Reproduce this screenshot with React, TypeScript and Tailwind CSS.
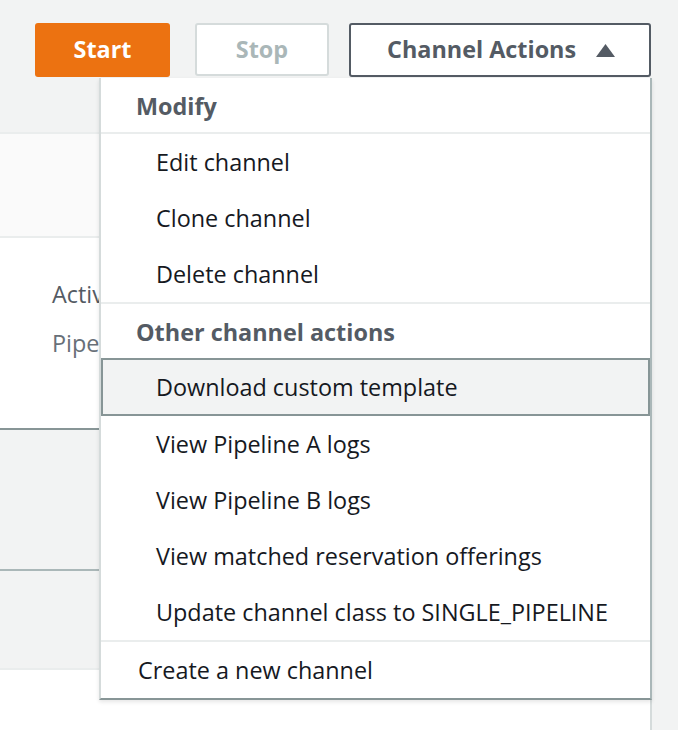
import React from 'react';

const font = { fontFamily: '"Open Sans", "Liberation Sans", sans-serif' };

const modifyItems = ['Edit channel', 'Clone channel', 'Delete channel'];
const otherItems = [
  'View Pipeline A logs',
  'View Pipeline B logs',
  'View matched reservation offerings',
  'Update channel class to SINGLE_PIPELINE',
];

const MenuItem: React.FC<{ label: string; active?: boolean }> = ({ label, active }) => (
  <div
    className={
      active
        ? 'flex h-[58px] items-center border-2 border-[#879596] bg-[#f2f3f3] pl-[53px] pt-[2px] text-[#16191f]'
        : 'flex h-[56px] items-center pl-[55px] pt-[2px] text-[#16191f]'
    }
  >
    {label}
  </div>
);

export default function App() {
  return (
    <div style={font} className="relative h-[730px] w-[678px] overflow-hidden bg-[#f2f3f3] text-[23.4px]">
      {/* Toolbar */}
      <div className="flex h-[132px] items-start gap-[20px] pl-[35px] pt-[23px]">
        <button className="h-[54px] w-[135px] rounded-[3px] bg-[#ec7211] font-bold text-white">Start</button>
        <button className="ml-[5px] h-[53px] w-[134px] rounded-[3px] border-2 border-[#d5dbdb] bg-white font-bold text-[#aab7b8]">
          Stop
        </button>
        <button className="flex h-[54px] w-[302px] items-center justify-between rounded-[3px] border-2 border-[#545b64] bg-white pl-[36px] pr-[34px] font-bold text-[#545b64]">
          <span>Channel Actions</span>
          <svg width="19" height="13" viewBox="0 0 19 13">
            <path d="M9.5 0 L19 13 L0 13 Z" fill="#545b64" />
          </svg>
        </button>
      </div>

      {/* Content panel */}
      <div className="w-[652px] border-r-2 border-[#d5dbdb] bg-white">
        <div className="h-[106px] border-y-2 border-[#eaeded] bg-[#fafafa]" />
        <div className="flex h-[190px] flex-col gap-[14px] pl-[52px] pt-[39px]">
          <div className="text-[#545b64]">Active</div>
          <div className="text-[#687078]">Pipeline</div>
        </div>
        <div className="h-[143px] border-y-2 border-t-[#879596] border-b-[#aab7b8] bg-[#f2f3f3]" />
        <div className="h-[99px] border-b-2 border-[#eaeded] bg-[#f2f3f3]" />
        <div className="h-[60px] bg-white" />
      </div>

      {/* Dropdown menu */}
      <div className="absolute left-[99px] top-[78px] w-[553px] border-x-2 border-b-2 border-l-[#d5dbdb] border-r-[#aab7b8] border-b-[#879596] bg-white shadow-[0_2px_4px_rgba(0,0,0,0.1)]">
        <div className="flex h-[54px] items-center pl-[35px] pt-[3px] font-bold text-[#545b64]">Modify</div>
        <div className="border-t-2 border-[#eaeded]">
          {modifyItems.map((l) => (
            <MenuItem key={l} label={l} />
          ))}
        </div>
        <div className="flex h-[56px] items-center border-t-2 border-[#eaeded] pl-[35px] pt-[4px] font-bold text-[#545b64]">
          Other channel actions
        </div>
        <MenuItem label="Download custom template" active />
        {otherItems.map((l) => (
          <MenuItem key={l} label={l} />
        ))}
        <div className="flex h-[58px] items-center border-t-2 border-[#eaeded] pl-[37px] pt-[2px] text-[#16191f]">
          Create a new channel
        </div>
      </div>
    </div>
  );
}
